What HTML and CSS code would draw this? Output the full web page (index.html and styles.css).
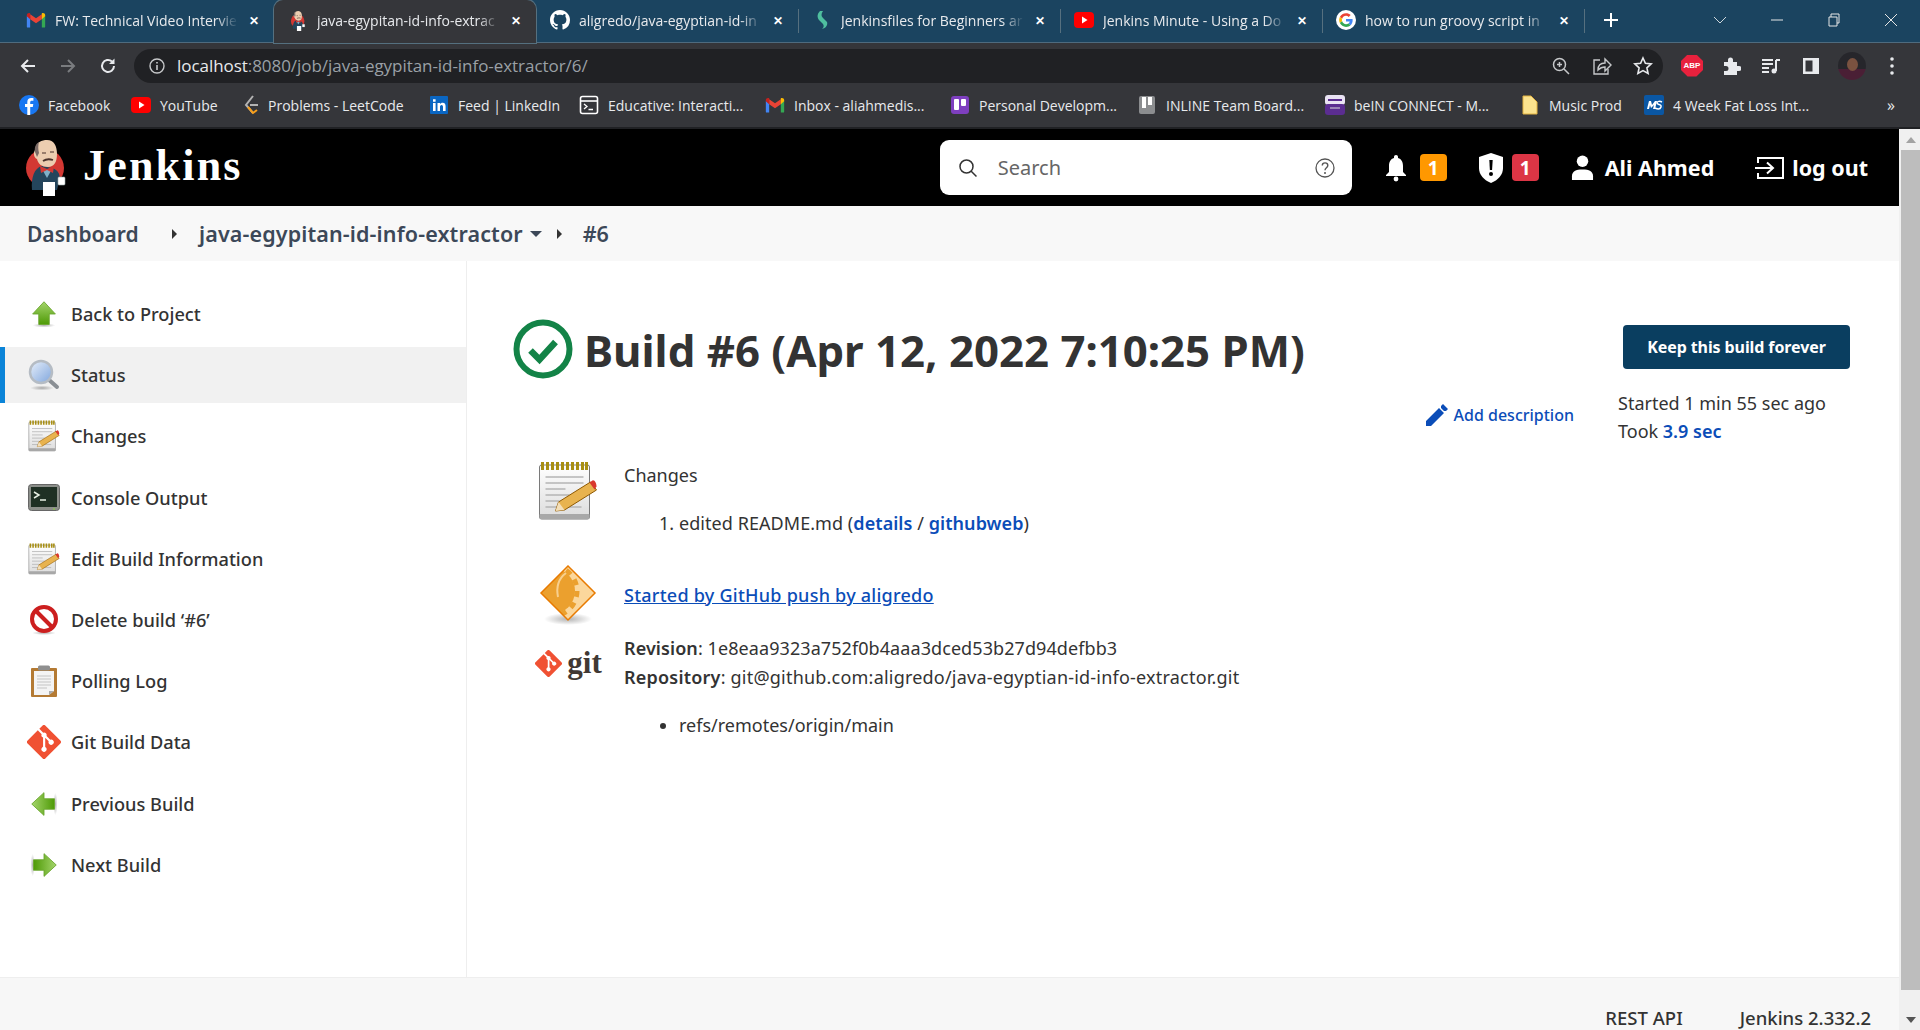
FILE: index.html
```html
<!DOCTYPE html>
<html lang="en">
<head>
<meta charset="utf-8">
<title>java-egypitan-id-info-extractor #6</title>
<link rel="stylesheet" href="styles.css">
</head>
<body>
<svg class="defs" aria-hidden="true">
  <defs>
    <linearGradient id="gGreen" x1="0" y1="0" x2="0" y2="1"><stop offset="0" stop-color="#a4d56b"/><stop offset="1" stop-color="#4e9a06"/></linearGradient>
    <linearGradient id="gGlass" x1="0" y1="0" x2="1" y2="1"><stop offset="0" stop-color="#e8f0fb"/><stop offset="1" stop-color="#7fa5dc"/></linearGradient>
    <linearGradient id="gPaper" x1="0" y1="0" x2="0" y2="1"><stop offset="0" stop-color="#fff"/><stop offset="1" stop-color="#dcdcdc"/></linearGradient>
    <radialGradient id="gShadow"><stop offset="0" stop-color="#000" stop-opacity=".3"/><stop offset="1" stop-color="#000" stop-opacity="0"/></radialGradient>
    <clipPath id="cDiamond"><path d="M30 1l27 27-27 27L3 28z"/></clipPath>
    <symbol id="i-butler" viewBox="0 0 40 56">
      <circle cx="19" cy="28" r="19" fill="#d33833"/>
      <path d="M6 50C5 38 8 28 16 26l10 2c7 2 9 8 7 14l-2 8z" fill="#24455c"/>
      <path d="M16 29h10l-5 9z" fill="#7fb0c8"/>
      <path d="M14 26l7 3 7-3-1 7-6-3-6 3z" fill="#d33833"/>
      <path d="M9 10C10 2 16 0 21 0c7 0 10 6 10 14 0 8-3 13-9 13-6 0-10-3-11-8-3-1-4-6-2-9z" fill="#eccdb0"/>
      <path d="M9 12C8 6 11 3 13 2c-1 4-1 7 0 11l-2 4z" fill="#7a6a66"/>
      <path d="M16 13h4M24 12h4" stroke="#49312a" stroke-width="1.200" fill="none"/>
      <path d="M17 21c3-2 7-2 10-1" stroke="#49312a" stroke-width="1.800" fill="none"/>
      <rect x="17" y="42" width="12" height="14" fill="#fff"/>
      <rect x="32" y="37" width="7" height="8" rx="1" fill="#fff" stroke="#9aa" stroke-width=".6"/>
    </symbol>
    <symbol id="i-gmail" viewBox="0 0 24 18">
      <path d="M1 18V4l4 3v11H2a1 1 0 0 1-1-1z" fill="#4285f4"/>
      <path d="M23 18V4l-4 3v11h3a1 1 0 0 0 1-1z" fill="#34a853"/>
      <path d="M5 8V2l7 5 7-5v6l-7 5z" fill="#ea4335"/>
      <path d="M1 4.500V3c0-2 2.400-3 4-2v7z" fill="#c5221f"/>
      <path d="M23 4.500V3c0-2-2.400-3-4-2v7z" fill="#fbbc04"/>
    </symbol>
    <symbol id="i-yt" viewBox="0 0 20 20">
      <rect x="0" y="2" width="20" height="16" rx="4" fill="#f00"/>
      <path d="M8 6.500l5.500 3.500L8 13.500z" fill="#fff"/>
    </symbol>
    <symbol id="i-note" viewBox="5 1 59 60">
      <rect x="6" y="5" width="50" height="54" rx="2" fill="url(#gPaper)" stroke="#7a7a7a" stroke-width="1"/>
      <rect x="6" y="54" width="50" height="5" rx="1" fill="#a8a8a8"/>
      <path d="M9 2v8M14 2v8M19 2v8M24 2v8M29 2v8M34 2v8M39 2v8M44 2v8M49 2v8M53 2v8" stroke="#a88f14" stroke-width="3"/>
      <path d="M12 17h38M12 23h38M12 29h20M12 35h24M12 41h14M12 47h36" stroke="#b5b5b5" stroke-width="1.500"/>
      <path d="M22 51l3-9 32-20 6 8-32 20z" fill="#e8b34f" stroke="#8f5902" stroke-width="1"/>
      <path d="M22 51l3-9 6 8z" fill="#f3dfba"/>
      <path d="M56 22.500l3-2c2-1 4 3 4 6l-2 3z" fill="#d9382e"/>
    </symbol>
    <symbol id="i-arrow" viewBox="0 0 32 32">
      <ellipse cx="16" cy="29" rx="13" ry="2.500" fill="url(#gShadow)"/>
      <path d="M16 2 29 16H22V28H10V16H3z" fill="url(#gGreen)" stroke="#6aa62e" stroke-width="1"/>
    </symbol>
    <symbol id="i-git" viewBox="0 0 92 92">
      <path fill="#f05133" d="M90.156 41.965 50.036 1.848a5.918 5.918 0 0 0-8.372 0l-8.328 8.332 10.566 10.566a7.030 7.030 0 0 1 7.230 1.684 7.034 7.034 0 0 1 1.669 7.277l10.187 10.184a7.028 7.028 0 0 1 7.278 1.672 7.040 7.040 0 0 1 0 9.957 7.050 7.050 0 0 1-9.965 0 7.044 7.044 0 0 1-1.528-7.660l-9.500-9.497V59.360a7.040 7.040 0 0 1 1.860 11.290 7.040 7.040 0 0 1-9.957 0 7.040 7.040 0 0 1 0-9.958 7.060 7.060 0 0 1 2.304-1.539V33.926a7.049 7.049 0 0 1-3.820-9.234L29.242 14.272 1.730 41.777a5.925 5.925 0 0 0 0 8.371L41.852 90.270a5.925 5.925 0 0 0 8.370 0l39.934-39.934a5.925 5.925 0 0 0 0-8.371"/>
    </symbol>
  </defs>
</svg>

<div class="chrome">
  <div class="tabstrip">
    <div class="tab">
      <svg class="fav"><use href="#i-gmail"/></svg><span class="tab-title">FW: Technical Video Intervie</span><span class="tab-x">✕</span>
    </div>
    <div class="tab active">
      <svg class="fav"><use href="#i-butler"/></svg><span class="tab-title">java-egypitan-id-info-extrac</span><span class="tab-x">✕</span>
    </div>
    <div class="tab">
      <svg class="fav" viewBox="0 0 16 16"><path fill="#fff" d="M8 0C3.58 0 0 3.58 0 8c0 3.540 2.290 6.530 5.470 7.590.4.070.55-.17.55-.38 0-.19-.01-.82-.01-1.490-2.010.37-2.530-.49-2.690-.94-.09-.23-.48-.94-.82-1.130-.28-.15-.68-.52-.01-.53.63-.01 1.080.58 1.230.82.72 1.210 1.870.87 2.330.66.070-.52.28-.87.51-1.070-1.780-.2-3.640-.89-3.640-3.950 0-.87.31-1.590.82-2.150-.08-.2-.36-1.020.08-2.120 0 0 .67-.21 2.200.82.64-.18 1.320-.27 2-.27.68 0 1.360.09 2 .27 1.530-1.040 2.200-.82 2.200-.82.44 1.100.16 1.920.08 2.120.51.56.82 1.270.82 2.150 0 3.070-1.870 3.750-3.650 3.950.29.25.54.73.54 1.480 0 1.070-.01 1.930-.01 2.200 0 .21.15.46.55.38A8.013 8.013 0 0016 8c0-4.420-3.580-8-8-8z"/></svg><span class="tab-title">aligredo/java-egyptian-id-in</span><span class="tab-x">✕</span>
    </div>
    <div class="tab sep">
      <svg class="fav" viewBox="0 0 16 20"><path d="M6 1C3 4 3 7 5 10l4 4c1 2 1 3-1 5 4-1 6-4 5-7L9 8C7 6 7 4 9 1z" fill="#4fbf9f"/></svg><span class="tab-title">Jenkinsfiles for Beginners ar</span><span class="tab-x">✕</span>
    </div>
    <div class="tab sep">
      <svg class="fav"><use href="#i-yt"/></svg><span class="tab-title">Jenkins Minute - Using a Do</span><span class="tab-x">✕</span>
    </div>
    <div class="tab sep">
      <svg class="fav" viewBox="0 0 48 48"><circle cx="24" cy="24" r="24" fill="#fff"/><g transform="translate(7.500 7.500) scale(.69)"><path fill="#EA4335" d="M24 9.500c3.540 0 6.710 1.220 9.210 3.600l6.850-6.850C35.900 2.380 30.470 0 24 0 14.620 0 6.510 5.380 2.560 13.220l7.980 6.190C12.430 13.720 17.740 9.500 24 9.500z"/><path fill="#4285F4" d="M46.980 24.550c0-1.570-.15-3.090-.38-4.550H24v9.020h12.940c-.58 2.960-2.260 5.480-4.780 7.180l7.730 6c4.510-4.180 7.090-10.360 7.090-17.650z"/><path fill="#FBBC05" d="M10.530 28.590c-.48-1.450-.76-2.990-.76-4.590s.27-3.140.76-4.590l-7.980-6.190C.92 16.460 0 20.120 0 24c0 3.880.92 7.540 2.560 10.780l7.970-6.190z"/><path fill="#34A853" d="M24 48c6.480 0 11.930-2.130 15.890-5.810l-7.730-6c-2.150 1.450-4.920 2.300-8.160 2.300-6.260 0-11.570-4.220-13.470-9.910l-7.980 6.190C6.510 42.620 14.620 48 24 48z"/></g></svg><span class="tab-title">how to run groovy script in</span><span class="tab-x">✕</span>
    </div>
    <div class="newtab">
      <svg viewBox="0 0 16 16"><path d="M8 1v14M1 8h14" stroke="#fff" stroke-width="2"/></svg>
    </div>
    <div class="winctl">
      <svg class="w-chev" viewBox="0 0 14 8"><path d="M1 1l6 6 6-6" fill="none" stroke="#cfd8dd" stroke-width="1"/></svg>
      <svg class="w-btn" viewBox="0 0 14 14"><path d="M1 7h12" stroke="#e6e6e6" stroke-width="1"/></svg>
      <svg class="w-btn" viewBox="0 0 14 14"><path d="M2 4h8v9H2zM4 4V1h8v9h-2" fill="none" stroke="#e6e6e6" stroke-width="1"/></svg>
      <svg class="w-btn" viewBox="0 0 14 14"><path d="M1 1l12 12M13 1L1 13" stroke="#e6e6e6" stroke-width="1"/></svg>
    </div>
  </div>

  <div class="toolbar">
    <svg class="tb-ico back" viewBox="0 0 18 18"><path d="M16 9H3M9 3L3 9l6 6" fill="none" stroke="#e8eaed" stroke-width="2"/></svg>
    <svg class="tb-ico fwd" viewBox="0 0 18 18"><path d="M2 9h13M9 3l6 6-6 6" fill="none" stroke="#7a7c7f" stroke-width="2"/></svg>
    <svg class="tb-ico reload" viewBox="0 0 18 18"><path d="M15 9a6 6 0 1 1-2-4.500" fill="none" stroke="#e8eaed" stroke-width="2"/><path d="M15.500 1.500V7H10z" fill="#e8eaed"/></svg>
    <div class="omnibox">
      <svg class="info" viewBox="0 0 16 16"><circle cx="8" cy="8" r="7" fill="none" stroke="#c6c8ca" stroke-width="1.400"/><path d="M8 7v5M8 4v1.600" stroke="#c6c8ca" stroke-width="1.600"/></svg>
      <span class="url"><b>localhost</b>:8080/job/java-egypitan-id-info-extractor/6/</span>
      <svg class="om-ico" viewBox="0 0 20 20"><circle cx="8.500" cy="8.500" r="6" fill="none" stroke="#c6c8ca" stroke-width="1.500"/><path d="M13 13l5 5M6 8.500h5M8.500 6v5" stroke="#c6c8ca" stroke-width="1.500"/></svg>
      <svg class="om-ico" viewBox="0 0 20 20"><path d="M8 4H2v14h14v-5" fill="none" stroke="#c6c8ca" stroke-width="1.400"/><path d="M6 14c0-5 3-7 7-7V3l6 6-6 6v-4c-3 0-5 1-7 3z" fill="none" stroke="#c6c8ca" stroke-width="1.400"/></svg>
      <svg class="om-ico" viewBox="0 0 20 20"><path d="M10 2l2.400 5.300 5.800.6-4.300 3.900 1.200 5.700L10 14.600l-5.100 2.900 1.200-5.700L1.800 7.900l5.800-.6z" fill="none" stroke="#e8eaed" stroke-width="1.600"/></svg>
    </div>
    <div class="ext">
      <div class="abp"><span>ABP</span></div>
      <svg class="ext-ico" viewBox="0 0 20 20"><path d="M3 6h4V4a2.500 2.500 0 0 1 5 0v2h4v4h2a2.500 2.500 0 0 1 0 5h-2v4H3v-4h2a2.500 2.500 0 0 0 0-5H3z" fill="#e8eaed"/></svg>
      <svg class="ext-ico" viewBox="0 0 20 20"><path d="M1 4h11M1 8h11M1 12h7M1 16h7" stroke="#e8eaed" stroke-width="1.800"/><path d="M15 4v11" stroke="#e8eaed" stroke-width="2"/><circle cx="13" cy="15" r="2.500" fill="#e8eaed"/><path d="M15 4h4" stroke="#e8eaed" stroke-width="2"/></svg>
      <svg class="ext-ico" viewBox="0 0 20 20"><path d="M2 2h16v16H2z" fill="#e8eaed"/><path d="M4.500 4.500h7v11h-7z" fill="#35363a"/></svg>
      <div class="avatar"><span class="avatar-face"></span></div>
      <svg class="menu-dots" viewBox="0 0 4 18"><circle cx="2" cy="2" r="1.800" fill="#e8eaed"/><circle cx="2" cy="9" r="1.800" fill="#e8eaed"/><circle cx="2" cy="16" r="1.800" fill="#e8eaed"/></svg>
    </div>
  </div>

  <div class="bookmarks">
    <div class="bm"><svg class="bm-ico" viewBox="0 0 20 20"><circle cx="10" cy="10" r="10" fill="#1877f2"/><path d="M11.200 20v-8h2.600l.5-3h-3.100V7.200c0-.9.4-1.500 1.600-1.500h1.600V3.100c-.5-.1-1.300-.2-2.200-.2-2.400 0-3.900 1.400-3.900 4V9H6v3h2.300v8z" fill="#fff"/></svg><span>Facebook</span></div>
    <div class="bm"><svg class="bm-ico"><use href="#i-yt"/></svg><span>YouTube</span></div>
    <div class="bm"><svg class="bm-ico bm-narrow" viewBox="0 0 16 20"><path d="M10 1L3 10l7 8" fill="none" stroke="#b3b3b3" stroke-width="2"/><path d="M7 10h8" stroke="#b3b3b3" stroke-width="2"/><path d="M5 12l5 6 4-3" fill="none" stroke="#f89f1b" stroke-width="2"/></svg><span>Problems - LeetCode</span></div>
    <div class="bm"><svg class="bm-ico" viewBox="0 0 20 20"><rect x="1" y="1" width="18" height="18" rx="1" fill="#0a66c2"/><path d="M4 8h2.600v8H4zM4 4.300h2.600v2.400H4zM8.500 8H11v1.200c.5-.8 1.400-1.400 2.600-1.400 2.300 0 3 1.500 3 3.700V16H14v-4c0-1-.3-2-1.400-2-1.200 0-1.600 1-1.600 2v4H8.500z" fill="#fff"/></svg><span>Feed | LinkedIn</span></div>
    <div class="bm"><svg class="bm-ico" viewBox="0 0 20 20"><rect x="1.500" y="1.500" width="17" height="17" rx="2" fill="none" stroke="#fff" stroke-width="1.600"/><path d="M2 6h16" stroke="#fff" stroke-width="1.600"/><path d="M5 9l3 2.500L5 14M9.500 14.500H14" fill="none" stroke="#fff" stroke-width="1.300"/></svg><span>Educative: Interacti...</span></div>
    <div class="bm"><svg class="bm-ico"><use href="#i-gmail"/></svg><span>Inbox - aliahmedis...</span></div>
    <div class="bm"><svg class="bm-ico" viewBox="0 0 20 20"><rect x="1" y="1" width="18" height="18" rx="3" fill="#7e3fbf"/><rect x="4" y="4" width="5" height="11" rx="1" fill="#fff"/><rect x="11" y="4" width="5" height="7" rx="1" fill="#fff"/></svg><span>Personal Developm...</span></div>
    <div class="bm"><svg class="bm-ico" viewBox="0 0 20 20"><rect x="2" y="1" width="16" height="18" rx="2" fill="#8b8d8f"/><rect x="5" y="2" width="4" height="11" fill="#fff"/><rect x="11" y="2" width="4" height="8" fill="#fff"/></svg><span>INLINE Team Board...</span></div>
    <div class="bm"><svg class="bm-ico" viewBox="0 0 20 20"><rect x="0" y="0" width="20" height="10" rx="3" fill="#e9e3f3"/><rect x="0" y="9" width="20" height="11" rx="3" fill="#5b2d91"/><path d="M3 5h14" stroke="#5b2d91" stroke-width="2"/><path d="M5 13h10" stroke="#ddd" stroke-width="1"/></svg><span>beIN CONNECT - M...</span></div>
    <div class="bm"><svg class="bm-ico" viewBox="0 0 20 20"><path d="M3 1h8l6 6v12H3z" fill="#fbe38e" stroke="#e3b341" stroke-width="1"/></svg><span>Music Prod</span></div>
    <div class="bm"><svg class="bm-ico" viewBox="0 0 20 20"><rect x="0" y="0" width="20" height="20" rx="2" fill="#0a57a4"/><path d="M3 14l2-8h2l1 4 3-4h2l-2 8h-2l1-4-3 3-1-3-1 4z" fill="#fff"/><path d="M18 7c-2-1-5-1-5 1s5 1 4 4-4 2-6 1" fill="none" stroke="#fff" stroke-width="1.500"/></svg><span>4 Week Fat Loss Int...</span></div>
    <div class="bm-more">»</div>
  </div>
</div>

<div class="viewport">
  <div class="page">
    <header class="jk-header">
      <svg class="jk-logo"><use href="#i-butler"/></svg>
      <span class="jk-name">Jenkins</span>
      <div class="jk-search">
        <svg class="s-ico" viewBox="0 0 20 20"><circle cx="8.500" cy="8.500" r="6.500" fill="none" stroke="#333" stroke-width="1.500"/><path d="M13 13l5.500 5.500" stroke="#333" stroke-width="1.500"/></svg>
        <span class="s-text">Search</span>
        <svg class="s-help" viewBox="0 0 20 20"><circle cx="10" cy="10" r="9" fill="none" stroke="#555" stroke-width="1.300"/><path d="M7.300 7.500c0-3.500 5.500-3.500 5.500 0 0 2.300-2.800 2.200-2.800 4.700" fill="none" stroke="#555" stroke-width="1.400"/><circle cx="10" cy="15" r="1" fill="#555"/></svg>
      </div>
      <svg class="h-ico h-bell" viewBox="0 0 22 28"><path d="M11 1c1.200 0 2 .8 2 2v1c3.500 1 5 4 5 8v6l3 3v1H1v-1l3-3v-6c0-4 1.500-7 5-8V3c0-1.200.8-2 2-2z" fill="#fff"/><circle cx="11" cy="25" r="2.400" fill="#fff"/></svg>
      <span class="badge orange">1</span>
      <svg class="h-ico h-shield" viewBox="0 0 24 30"><path d="M12 0l12 4v11c0 7-5 12-12 15C5 27 0 22 0 15V4z" fill="#fff"/><path d="M10.300 7h3.400l-.6 10h-2.200z" fill="#000"/><circle cx="12" cy="21" r="2" fill="#000"/></svg>
      <span class="badge red">1</span>
      <svg class="h-ico h-user" viewBox="0 0 24 26"><circle cx="12" cy="6.500" r="6" fill="#fff"/><path d="M1 26v-4c0-5 4-7 11-7s11 2 11 7v4z" fill="#fff"/></svg>
      <span class="h-name">Ali Ahmed</span>
      <svg class="h-ico h-out" viewBox="0 0 30 24"><path d="M3 7V2h25v20H3v-5" fill="none" stroke="#fff" stroke-width="2"/><path d="M0 12h17M12 6.500l6 5.500-6 5.500" fill="none" stroke="#fff" stroke-width="2"/></svg>
      <span class="h-logout">log out</span>
    </header>

    <nav class="crumbs">
      <span class="cr-dash">Dashboard</span>
      <span class="cr-arrow"></span>
      <span class="cr-job">java-egypitan-id-info-extractor</span>
      <span class="cr-caret"></span>
      <span class="cr-arrow cr-arrow2"></span>
      <span class="cr-num">#6</span>
    </nav>

    <div class="content">
      <aside class="side">
        <a class="side-item"><span class="side-ico"><svg class="ic28"><use href="#i-arrow"/></svg></span>Back to Project</a>
        <a class="side-item current"><span class="side-ico"><svg class="ic32" viewBox="0 0 32 32"><ellipse cx="14" cy="29" rx="12" ry="2.500" fill="url(#gShadow)"/><path d="M20 20l9 8" stroke="#8a8f94" stroke-width="4" stroke-linecap="round"/><circle cx="13" cy="13" r="11" fill="url(#gGlass)" stroke="#b5bcc4" stroke-width="2.500"/></svg></span>Status</a>
        <a class="side-item"><span class="side-ico"><svg class="ic32"><use href="#i-note"/></svg></span>Changes</a>
        <a class="side-item"><span class="side-ico"><svg class="ic32" viewBox="0 0 32 32"><rect x="0.500" y="2.500" width="31" height="26" rx="3" fill="#8c8f8a" stroke="#666"/><rect x="3" y="5" width="26" height="20" fill="#1f3024"/><path d="M6 10l5 3-5 3M12 18h6" fill="none" stroke="#e8f0e4" stroke-width="1.500"/><circle cx="26" cy="27" r=".8" fill="#8ae234"/></svg></span>Console Output</a>
        <a class="side-item"><span class="side-ico"><svg class="ic32"><use href="#i-note"/></svg></span>Edit Build Information</a>
        <a class="side-item"><span class="side-ico"><svg class="ic32" viewBox="0 0 32 32"><ellipse cx="16" cy="29" rx="12" ry="2" fill="url(#gShadow)"/><circle cx="16" cy="15" r="12" fill="#fff" stroke="#cc1f1f" stroke-width="4"/><path d="M8 7l16 16" stroke="#cc1f1f" stroke-width="4"/></svg></span>Delete build ‘#6’</a>
        <a class="side-item"><span class="side-ico"><svg class="ic32" viewBox="0 0 32 32"><rect x="3" y="3" width="26" height="29" rx="1" fill="#b47a33"/><path d="M6 6h20v20l-5 4H6z" fill="#f4f4f4"/><path d="M21 30l5-4h-5z" fill="#aaa"/><rect x="10" y="0.500" width="12" height="5" rx="1.500" fill="#8f8f8f"/><path d="M9 11h14M9 14h14M9 17h14M9 20h14M9 23h10" stroke="#c4c4c4" stroke-width="1"/></svg></span>Polling Log</a>
        <a class="side-item"><span class="side-ico"><svg class="ic34"><use href="#i-git"/></svg></span>Git Build Data</a>
        <a class="side-item"><span class="side-ico"><svg class="ic28 rot-left"><use href="#i-arrow"/></svg></span>Previous Build</a>
        <a class="side-item"><span class="side-ico"><svg class="ic28 rot-right"><use href="#i-arrow"/></svg></span>Next Build</a>
      </aside>

      <main class="main">
        <div class="title-row">
          <div class="title-left">
            <svg class="status-ico" viewBox="0 0 60 60"><circle cx="30" cy="30" r="26.500" fill="#fff" stroke="#138347" stroke-width="6"/><path d="M17.500 31.500l9 9 16-17.500" fill="none" stroke="#138347" stroke-width="6.500"/></svg>
            <h1 class="title">Build #6 (Apr 12, 2022 7:10:25 PM)</h1>
          </div>
          <button class="keep">Keep this build forever</button>
        </div>

        <div class="meta-row">
          <a class="add-desc"><svg class="pencil" viewBox="0 0 22 22"><path d="M0 22v-5L13 4l5 5L5 22zM15 2l2-2 5 5-2 2-2 .1-3-3z" fill="#0b4db8"/></svg>Add description</a>
          <div class="timing">
            <div>Started 1 min 55 sec ago</div>
            <div>Took <a class="blue">3.9 sec</a></div>
          </div>
        </div>

        <section class="b-row changes">
          <div class="b-ico"><svg class="ic60"><use href="#i-note"/></svg></div>
          <div class="b-text">
            <div>Changes</div>
            <ol class="b-list"><li>edited README.md (<a class="blue">details</a> / <a class="blue">githubweb</a>)</li></ol>
          </div>
        </section>

        <section class="b-row started">
          <div class="b-ico"><svg class="ic60" viewBox="0 0 60 60"><ellipse cx="30" cy="54" rx="24" ry="6" fill="url(#gShadow)"/><path d="M30 1l27 27-27 27L3 28z" fill="#fbd79c"/><g clip-path="url(#cDiamond)"><circle cx="14" cy="26" r="23" fill="#eba02e"/><circle cx="14" cy="26" r="25" fill="none" stroke="#eba02e" stroke-width="5" stroke-dasharray="6 6"/><path d="M28 8c-8 6-10 14-8 24" fill="none" stroke="#f8cf8e" stroke-width="2"/></g><path d="M30 1l27 27-27 27L3 28z" fill="none" stroke="#e87a00" stroke-width="1.500"/></svg></div>
          <a class="link-u">Started by GitHub push by aligredo</a>
        </section>

        <section class="b-row gitrow">
          <div class="b-ico git-logo"><svg class="git-mark"><use href="#i-git"/></svg><span class="git-word">git</span></div>
          <div class="b-text">
            <div class="rev"><b class="lbl">Revision</b>: 1e8eaa9323a752f0b4aaa3dced53b27d94defbb3</div>
            <div class="repo"><b class="lbl">Repository</b>: git@github.com:aligredo/java-egyptian-id-info-extractor.git</div>
          </div>
        </section>
        <ul class="refs"><li>refs/remotes/origin/main</li></ul>
      </main>
    </div>

    <footer class="foot">
      <span>REST API</span>
      <span>Jenkins 2.332.2</span>
    </footer>
  </div>

  <div class="scrollbar">
    <span class="sb-up"></span>
    <span class="sb-thumb"></span>
    <span class="sb-down"></span>
  </div>
</div>
</body>
</html>
```

FILE: styles.css
```css
* { box-sizing: border-box; }
html, body { margin: 0; height: 100%; }
body {
  width: 1920px;
  height: 1030px;
  overflow: hidden;
  display: flex;
  flex-direction: column;
  font-family: "Noto Sans", "Open Sans", sans-serif;
  color: #333;
  background: #fff;
}
.defs { width: 0; height: 0; display: block; flex: none; }
a { color: inherit; }

/* browser chrome */
.chrome { flex: none; height: 129px; display: flex; flex-direction: column; background: #35363a; font-family: "Open Sans", sans-serif; }
.tabstrip { height: 43px; flex: none; display: flex; align-items: stretch; padding-left: 12px; background: #1b4460; border-bottom: 1px solid #4f6b7e; }
.tab { width: 262px; flex: none; display: flex; align-items: center; padding: 0 10px 2px 14px; color: #e8eaed; font-size: 14px; }
.tab.active { background: #35363a; border-radius: 9px 9px 0 0; box-shadow: 0 0 0 1px #55707f; margin-bottom: -1px; }
.tab.sep { background: linear-gradient(#56707f, #56707f) left 9px / 1px 24px no-repeat; }
.fav { width: 20px; height: 20px; flex: none; margin-right: 9px; }
.tab-title { flex: 1; min-width: 0; overflow: hidden; white-space: nowrap; -webkit-mask-image: linear-gradient(90deg, #000 88%, transparent); mask-image: linear-gradient(90deg, #000 88%, transparent); }
.tab-x { width: 20px; flex: none; text-align: center; font-size: 12px; font-weight: 700; color: #fff; margin-left: 6px; }
.newtab { width: 50px; flex: none; display: flex; align-items: center; justify-content: center; padding: 0 0 2px 4px; background: linear-gradient(#56707f, #56707f) left 9px / 1px 24px no-repeat; }
.newtab svg { width: 16px; height: 16px; }
.winctl { flex: 1; display: flex; align-items: center; justify-content: flex-end; padding-bottom: 2px; }
.w-chev { width: 14px; height: 8px; margin-right: 43px; }
.w-btn { width: 14px; height: 14px; margin-right: 43px; }
.w-btn:last-child { margin-right: 22px; }

.toolbar { height: 42px; flex: none; display: flex; align-items: center; padding: 3px 0 0 19px; }
.tb-ico { width: 18px; height: 18px; flex: none; margin-right: 22px; }
.tb-ico.reload { margin-right: 17px; }
.omnibox { width: 1529px; height: 34px; flex: none; background: #202124; border-radius: 17px; display: flex; align-items: center; padding: 0 10px 0 15px; font-size: 17px; letter-spacing: -.05px; color: #9aa0a6; }
.info { width: 16px; height: 16px; margin-right: 12px; flex: none; }
.url { flex: 1; white-space: nowrap; }
.url b { font-weight: 400; color: #e8eaed; }
.om-ico { width: 20px; height: 20px; flex: none; margin-left: 21px; }
.ext { flex: 1; display: flex; align-items: center; padding-left: 18px; }
.abp { width: 22px; height: 22px; background: #e8213d; clip-path: polygon(30% 0, 70% 0, 100% 30%, 100% 70%, 70% 100%, 30% 100%, 0 70%, 0 30%); display: flex; align-items: center; justify-content: center; flex: none; margin-right: 18px; }
.abp span { color: #fff; font: 700 8px "Liberation Sans", sans-serif; }
.ext-ico { width: 20px; height: 20px; flex: none; margin-right: 20px; }
.avatar { width: 28px; height: 28px; border-radius: 50%; background: linear-gradient(#26262b 0 62%, #4a1f35 62%); flex: none; display: flex; align-items: flex-start; justify-content: center; padding-top: 6px; margin-left: -3px; }
.avatar-face { width: 11px; height: 13px; border-radius: 50%; background: #7a5240; }
.menu-dots { width: 4px; height: 18px; margin-left: 24px; flex: none; }

.bookmarks { flex: 1; display: grid; grid-template-columns: 112px 112px 186px 150px 186px 185px 187px 188px 195px 124px 243px 1fr; align-items: center; padding: 0 0 2px 19px; font-size: 14px; color: #e8eaed; border-bottom: 2px solid #202124; }
.bm { display: flex; align-items: center; white-space: nowrap; }
.bm-ico { width: 20px; height: 20px; flex: none; margin-right: 9px; }
.bm-narrow { width: 16px; }
.bm-more { font-size: 16px; }

/* page */
.viewport { flex: 1; display: flex; min-height: 0; }
.page { flex: 1; display: flex; flex-direction: column; min-width: 0; }

.jk-header { height: 77px; flex: none; background: #000; display: flex; align-items: center; color: #fff; padding-left: 26px; }
.jk-logo { width: 40px; height: 56px; flex: none; margin-right: 17px; }
.jk-name { font: 700 44px/50px "Liberation Serif", serif; flex: 0 0 158px; margin-right: 697px; white-space: nowrap; letter-spacing: 2.200px; padding-bottom: 4px; }
.jk-search { width: 412px; height: 55px; flex: none; background: #fff; border-radius: 9px; display: flex; align-items: center; padding: 0 17px 0 18px; margin-right: 33px; }
.s-ico { width: 20px; height: 20px; flex: none; margin-right: 20px; }
.s-text { flex: 1; font-size: 20px; color: #666; }
.s-help { width: 20px; height: 20px; flex: none; }
.h-ico { flex: none; }
.h-bell { width: 22px; height: 28px; margin-right: 13px; }
.badge { width: 27px; height: 27px; flex: none; border-radius: 4px; display: flex; align-items: center; justify-content: center; font-weight: 700; font-size: 19px; color: #fff; }
.badge.orange { background: #ff9800; margin-right: 32px; }
.badge.red { background: #dc3545; margin-right: 32px; }
.h-shield { width: 24px; height: 30px; margin-right: 9px; }
.h-user { width: 23px; height: 25px; margin-right: 11px; }
.h-name { font-size: 21.500px; font-weight: 700; margin-right: 41px; white-space: nowrap; }
.h-out { width: 30px; height: 24px; margin-right: 7px; }
.h-logout { font-size: 21.500px; font-weight: 700; white-space: nowrap; }

.crumbs { height: 55px; flex: none; background: #f8f8f8; display: flex; align-items: center; padding-left: 27px; font-size: 21px; font-weight: 600; color: #3c4858; }
.cr-dash { width: 145px; }
.cr-job { font-size: 21.500px; letter-spacing: .12px; }
.cr-num { font-size: 21.500px; }
.cr-arrow { width: 0; height: 0; border-left: 5px solid #333; border-top: 5px solid transparent; border-bottom: 5px solid transparent; margin-right: 22px; }
.cr-arrow2 { margin-left: 15px; margin-right: 21px; }
.cr-caret { width: 0; height: 0; border-top: 6px solid #3c4858; border-left: 6px solid transparent; border-right: 6px solid transparent; margin-left: 7px; }

.content { flex: 1; display: flex; min-height: 0; }
.side { width: 467px; flex: none; border-right: 1px solid #eee; padding-top: 25px; display: flex; flex-direction: column; gap: 5.200px; font-size: 18.200px; font-weight: 500; color: #333; }
.side-item { height: 56px; flex: none; display: flex; align-items: center; padding-left: 27px; }
.side-item.current { background: #f1f1f1; border-left: 5px solid #0b84d8; padding-left: 22px; }
.side-ico { width: 34px; height: 34px; flex: none; margin-right: 10px; display: flex; align-items: center; justify-content: center; }
.ic28 { width: 28px; height: 28px; }
.ic32 { width: 32px; height: 32px; }
.ic34 { width: 34px; height: 34px; }
.rot-left { transform: rotate(-90deg); }
.rot-right { transform: rotate(90deg); }

.main { flex: 1; min-width: 0; padding: 58px 49px 0 46px; font-size: 18px; }
.title-row { display: flex; justify-content: space-between; align-items: flex-start; }
.title-left { display: flex; align-items: center; height: 59px; }
.status-ico { width: 60px; height: 60px; flex: none; margin-right: 11px; }
.title { margin: 0; padding-top: 4px; font-size: 43.750px; line-height: 59px; font-weight: 700; color: #333; white-space: nowrap; }
.keep { width: 227px; height: 44px; margin-top: 6px; background: #0a3e60; color: #fff; border: 0; border-radius: 4px; font: 700 16px "Noto Sans", sans-serif; letter-spacing: -.1px; }

.meta-row { display: flex; justify-content: flex-end; align-items: center; margin-top: 11px; gap: 44px; }
.add-desc { display: flex; align-items: center; color: #0b4db8; font-size: 16px; font-weight: 500; margin-bottom: 4px; }
.pencil { width: 22px; height: 22px; margin-right: 6px; flex: none; }
.timing { width: 232px; line-height: 28px; }
.blue { color: #0b4db8; font-weight: 600; }

.b-row { display: flex; line-height: 28px; }
.b-ico { width: 111px; flex: none; display: flex; justify-content: center; padding-right: 2px; }
.ic60 { width: 60px; height: 60px; }
.changes { margin-top: 16px; }
.b-text { flex: 1; min-width: 0; }
.b-list { margin: 20px 0 0; padding-left: 55px; letter-spacing: .06px; }
.started { margin-top: 28px; align-items: center; }
.link-u { color: #0b4db8; text-decoration: underline; font-weight: 500; letter-spacing: .25px; }
.gitrow { margin-top: 9px; align-items: center; }
.git-logo { align-items: center; gap: 5px; padding-right: 0; }
.git-mark { width: 27px; height: 27px; flex: none; }
.git-word { font: 700 31px/30px "Liberation Serif", serif; color: #413934; }
.lbl { font-weight: 600; }
.rev { letter-spacing: .08px; }
.repo { letter-spacing: .21px; line-height: 30px; }
.refs { margin: 19px 0 0; padding-left: 166px; line-height: 28px; }

.foot { height: 53px; flex: none; background: #f7f7f7; border-top: 1px solid #eee; display: flex; justify-content: flex-end; align-items: flex-end; gap: 57px; padding: 0 28px 0 0; font-size: 18.500px; font-weight: 500; line-height: 24px; }

.scrollbar { width: 21px; flex: none; background: #f0f0f0; display: flex; flex-direction: column; align-items: center; padding: 8px 0 7px 2px; }
.sb-up { width: 0; height: 0; border-bottom: 6px solid #a3a3a3; border-left: 5px solid transparent; border-right: 5px solid transparent; margin-bottom: 7px; }
.sb-thumb { width: 19px; flex: 1; background: #bdbdbd; margin-bottom: 27px; }
.sb-down { width: 0; height: 0; border-top: 6px solid #555; border-left: 5px solid transparent; border-right: 5px solid transparent; }
```
